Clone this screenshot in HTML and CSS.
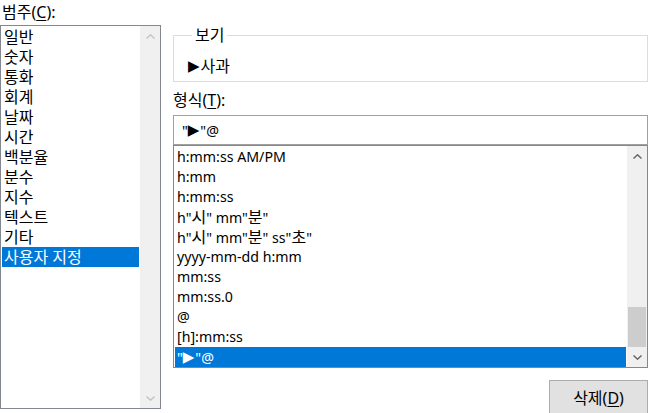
FILE: index.html
```html
<!DOCTYPE html>
<html lang="ko">
<head>
<meta charset="utf-8">
<link rel="stylesheet" href="styles.css">
</head>
<body>
<div class="dialog">
  <div class="left">
    <div class="label-top ko">범주(<u>C</u>):</div>
    <div class="listbox cat">
      <ul class="items ko">
        <li class="item">일반</li>
        <li class="item">숫자</li>
        <li class="item">통화</li>
        <li class="item">회계</li>
        <li class="item">날짜</li>
        <li class="item">시간</li>
        <li class="item">백분율</li>
        <li class="item">분수</li>
        <li class="item">지수</li>
        <li class="item">텍스트</li>
        <li class="item">기타</li>
        <li class="item selected">사용자 지정</li>
      </ul>
      <div class="vscroll disabled">
        <div class="arrow"><svg width="9" height="5" viewBox="0 0 9 5"><polyline points="0.5,4.5 4.5,0.8 8.5,4.5" fill="none" stroke="currentColor" stroke-width="1.4"/></svg></div>
        <div class="track"></div>
        <div class="arrow"><svg width="9" height="5" viewBox="0 0 9 5"><polyline points="0.5,0.5 4.5,4.2 8.5,0.5" fill="none" stroke="currentColor" stroke-width="1.4"/></svg></div>
      </div>
    </div>
  </div>
  <div class="right">
    <fieldset class="preview">
      <legend class="ko">보기</legend>
      <div class="sample"><span class="tri">▶</span><span class="ko">사과</span></div>
    </fieldset>
    <div class="label ko">형식(<u>T</u>):</div>
    <div class="input">"<span class="tri">▶</span>"@</div>
    <div class="listbox fmt">
      <ul class="items">
        <li class="item">h:mm:ss AM/PM</li>
        <li class="item">h:mm</li>
        <li class="item">h:mm:ss</li>
        <li class="item">h"<span class="ko">시</span>" mm"<span class="ko">분</span>"</li>
        <li class="item">h"<span class="ko">시</span>" mm"<span class="ko">분</span>" ss"<span class="ko">초</span>"</li>
        <li class="item">yyyy-mm-dd h:mm</li>
        <li class="item">mm:ss</li>
        <li class="item">mm:ss.0</li>
        <li class="item">@</li>
        <li class="item">[h]:mm:ss</li>
        <li class="item selected">"<span class="tri">▶</span>"@</li>
      </ul>
      <div class="vscroll">
        <div class="arrow"><svg width="9" height="5" viewBox="0 0 9 5"><polyline points="0.5,4.5 4.5,0.8 8.5,4.5" fill="none" stroke="currentColor" stroke-width="1.4"/></svg></div>
        <div class="track"><div class="thumb"></div></div>
        <div class="arrow"><svg width="9" height="5" viewBox="0 0 9 5"><polyline points="0.5,0.5 4.5,4.2 8.5,0.5" fill="none" stroke="currentColor" stroke-width="1.4"/></svg></div>
      </div>
    </div>
    <div class="actions">
      <button class="btn ko">삭제(<u>D</u>)</button>
    </div>
  </div>
</div>
</body>
</html>
```

FILE: styles.css
```css
* { box-sizing: border-box; }
html, body { margin: 0; padding: 0; background: #fff; }
body {
  font-family: "Noto Sans", "Noto Sans CJK KR", sans-serif;
  font-size: 14.2px;
  color: #000;
  width: 658px;
  height: 413px;
  overflow: hidden;
}
.ko { font-size: 16px; }
.tri {
  font-family: "DejaVu Sans", sans-serif;
  font-size: 15px;
  vertical-align: 1px;
  margin: 0 1px 0 0;
}
u { text-decoration: underline; text-underline-offset: 2px; }

.dialog { display: flex; gap: 12px; height: 413px; }

.left { width: 161px; display: flex; flex-direction: column; }
.label-top { height: 25px; line-height: 25px; padding-left: 2px; }

.listbox {
  display: flex;
  border: 1px solid #828790;
  background: #fff;
}
.listbox.cat { height: 384px; }
.listbox.fmt { height: 223px; }

.items {
  list-style: none;
  margin: 0;
  padding: 1px 1px 0 1px;
  flex: 1;
  min-width: 0;
}
.item {
  height: 20px;
  line-height: 20px;
  padding-left: 2px;
  white-space: nowrap;
  overflow: hidden;
}
.item.selected { background: #0078d7; color: #fff; }

.vscroll {
  width: 20px;
  background: #f0f0f0;
  display: flex;
  flex-direction: column;
  color: #606060;
}
.vscroll.disabled { color: #c2c2c2; }
.arrow {
  height: 20px;
  display: flex;
  align-items: center;
  justify-content: center;
  flex: none;
}
.arrow svg { display: block; }
.track { flex: 1; display: flex; flex-direction: column; justify-content: flex-end; }
.thumb { height: 40px; margin: 0 1px; background: #cdcdcd; }

.right { width: 475px; display: flex; flex-direction: column; }

.preview {
  margin: 25px 0 0 0;
  padding: 0 0 5px 14px;
  border: 1px solid #dcdcdc;
  min-width: 0;
}
.preview legend {
  margin-left: 4px;
  padding: 0 3px;
  line-height: 20px;
  height: 20px;
}
.sample { margin-top: 11px; line-height: 20px; height: 20px; }

.label { height: 20px; line-height: 20px; margin: 8px 0 5px 0; }

.input {
  height: 30px;
  border: 1px solid #a0a0a0;
  line-height: 28px;
  padding-left: 8px;
}

.actions { display: flex; justify-content: flex-end; margin-top: 12px; }
.btn {
  width: 99px;
  height: 34px;
  border: 1px solid #adadad;
  background: #e1e1e1;
  font-family: inherit;
  color: #000;
  padding: 0;
}
```
